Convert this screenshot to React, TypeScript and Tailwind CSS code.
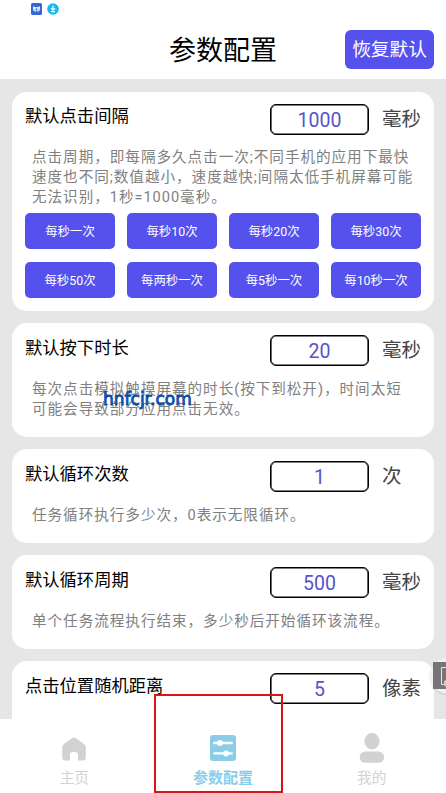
import React from "react";

const presets = [
  "每秒一次", "每秒10次", "每秒20次", "每秒30次",
  "每秒50次", "每两秒一次", "每5秒一次", "每10秒一次",
];

type CardProps = {
  title: string;
  value: string;
  unit: string;
  lines?: string[];
  height: string;
  textOffset?: string;
  children?: React.ReactNode;
};

function Card({ title, value, unit, lines = [], height, textOffset = "pt-px", children }: CardProps) {
  return (
    <section className={`${height} shrink-0 rounded-[15px] bg-white px-[13px] pt-3`}>
      <div className="flex h-[31px]">
        <h2 className={`${textOffset} w-[245px] whitespace-nowrap text-[17.3px] leading-6 text-black`}>{title}</h2>
        <div className="flex h-[31px] w-[99px] items-center justify-center rounded-md border border-black pt-[3px] text-[19.5px] leading-none text-[#5753c9] shadow-[inset_0_0_0_0.6px_#000]">
          {value}
        </div>
        <span className="ml-[13px] whitespace-nowrap pt-px text-[19.5px] leading-[29px] text-[#444]">{unit}</span>
      </div>
      <div className={`${textOffset} mt-3 pl-[7px] text-[14.6px] leading-5 tracking-[0.96px] text-[#808080]`}>
        {lines.map((l) => (
          <p key={l} className="whitespace-nowrap">{l}</p>
        ))}
      </div>
      {children}
    </section>
  );
}

function HomeIcon() {
  return (
    <svg width="24" height="24" viewBox="0 0 24 24" fill="#d2d2d2">
      <path d="M10.2 1.1Q12 0 13.8 1.1L22 7Q23.8 8.3 23.8 10.2V20.5Q23.8 23.5 20.8 23.5H16V18Q16 14.8 12 14.8T8 18V23.5H3.2Q.2 23.5.2 20.5V10.2Q.2 8.3 2 7Z" />
    </svg>
  );
}

function SettingsIcon() {
  return (
    <svg width="26" height="26" viewBox="0 0 26 26">
      <rect width="26" height="26" rx="3" fill="#8bcde8" />
      <g stroke="#fff" strokeWidth="2.4" strokeLinecap="round">
        <path d="M4.3 8H21.7M4.3 18.4H21.7" />
      </g>
      <circle cx="10" cy="8" r="3" fill="#fff" />
      <circle cx="16" cy="18.4" r="3" fill="#fff" />
    </svg>
  );
}

function UserIcon() {
  return (
    <svg width="26" height="30" viewBox="0 0 26 30" fill="#d2d2d2">
      <ellipse cx="13" cy="8.3" rx="7.6" ry="8.2" />
      <rect x=".6" y="18.5" width="24.6" height="11.3" rx="5.6" />
    </svg>
  );
}

export default function App() {
  return (
    <div className="relative flex h-[793px] w-[446px] flex-col overflow-hidden bg-[#e6e6e6] font-[Roboto,'Noto_Sans_CJK_SC',sans-serif]">
      <header className="h-[79px] shrink-0 bg-white">
        <div className="flex h-[29px] gap-[5px] pl-[31px] pt-[3px]">
          <svg width="11" height="12" viewBox="0 0 11 12">
            <rect width="11" height="12" rx="1.5" fill="#3867d5" />
            <path d="M2 3.2L4 4.1H7L9 3.2V7L7.5 8.4H3.5L2 7Z" fill="#dce8ff" />
            <path d="M5.5 4.8V9M4 6V7.2M7 6V7.2" stroke="#3867d5" strokeWidth=".7" />
          </svg>
          <svg width="12" height="12" viewBox="0 0 12 12">
            <circle cx="6" cy="6" r="5.8" fill="#13b9ef" />
            <path d="M6 2.5V7M4 5.3L6 7.2L8 5.3M4 8.7H8" fill="none" stroke="#fff" strokeWidth="1.2" />
          </svg>
        </div>
        <div className="grid h-[39px] grid-cols-[1fr_108px_1fr] items-center">
          <h1 className="col-start-2 whitespace-nowrap pt-1 text-[27px] leading-9 text-black">参数配置</h1>
          <button className="mr-3 h-[39px] w-[89px] justify-self-end whitespace-nowrap rounded-md bg-[#5451ed] pt-0.5 text-[18.7px] text-white">恢复默认</button>
        </div>
      </header>

      <main className="flex h-[640px] shrink-0 flex-col gap-3 overflow-hidden px-3 pt-[13px]">
        <Card
          title="默认点击间隔"
          value="1000"
          unit="毫秒"
          height="h-[219px]"
          textOffset="pt-0"
          lines={["点击周期，即每隔多久点击一次;不同手机的应用下最快", "速度也不同;数值越小，速度越快;间隔太低手机屏幕可能", "无法识别，1秒=1000毫秒。"]}
        >
          <div className="mt-1.5 grid grid-cols-4 gap-x-3 gap-y-[13px]">
            {presets.map((p) => (
              <button key={p} className="h-9 whitespace-nowrap rounded-[5px] bg-[#5451ed] pt-[3px] text-[12.4px] text-white">{p}</button>
            ))}
          </div>
        </Card>
        <Card title="默认按下时长" value="20" unit="毫秒" height="h-[114px]" lines={["每次点击模拟触摸屏幕的时长(按下到松开)，时间太短", "可能会导致部分应用点击无效。"]} />
        <Card title="默认循环次数" value="1" unit="次" height="h-[94px]" lines={["任务循环执行多少次，0表示无限循环。"]} />
        <Card title="默认循环周期" value="500" unit="毫秒" height="h-[94px]" lines={["单个任务流程执行结束，多少秒后开始循环该流程。"]} />
        <Card title="点击位置随机距离" value="5" unit="像素" height="h-[94px]" />
      </main>

      <nav className="grid h-[74px] shrink-0 grid-cols-3 bg-white text-[14.7px] leading-5 text-[#d2d2d2]">
        <div className="flex flex-col items-center">
          <div className="flex h-[44px] items-end pb-[2px]"><HomeIcon /></div>
          <span className="mt-[5px]">主页</span>
        </div>
        <div className="flex flex-col items-center text-[#8bcde8]">
          <div className="flex h-[44px] items-end pb-[2px]"><SettingsIcon /></div>
          <span className="mt-[5px] text-[15px] font-bold">参数配置</span>
        </div>
        <div className="flex flex-col items-center">
          <div className="flex h-[44px] items-end"><UserIcon /></div>
          <span className="mt-[5px]">我的</span>
        </div>
      </nav>

      <div className="absolute left-[430px] top-[657px] h-[37px] w-[37px] rounded-full bg-[#f1f1f1] shadow-sm" />
      <div className="absolute left-[433px] top-[662px] h-[27px] w-[13px] bg-[#747479]">
        <svg width="13" height="27" viewBox="0 0 13 27" fill="none">
          <path d="M13 5.5H8.5V22.5H13" stroke="#e8e8e8" />
          <path d="M11 19L13 18V25L11 23Z" fill="#e3c9a0" />
        </svg>
      </div>

      <div className="absolute left-[103px] top-[389px] whitespace-nowrap font-['DejaVu_Sans'] text-[17px] leading-5 text-[#0b60cf] [-webkit-text-stroke:0.8px_#06459f]">hnfcjr.com</div>
      <div className="absolute left-[154px] top-[694px] h-[99px] w-[129px] border-2 border-[#d71518]" />
    </div>
  );
}
